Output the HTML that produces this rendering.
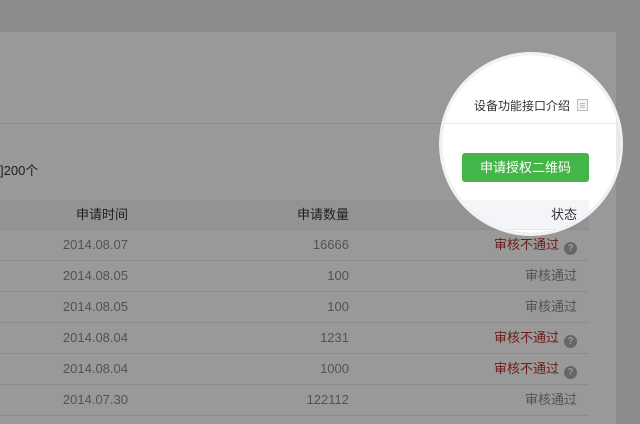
<!DOCTYPE html>
<html><head><meta charset="utf-8"><style>
*{margin:0;padding:0;box-sizing:border-box}
body{width:640px;height:424px;overflow:hidden;background:#8c8c8d;font-family:"Liberation Sans","Noto Sans CJK SC",sans-serif;}
.layer{position:absolute;left:0;top:0;width:640px;height:424px;background:#e9e9eb;}
.dim{filter:brightness(0.6);}
.hi{clip-path:circle(89px at 531px 144px);}
.panel{position:absolute;left:0;top:32px;width:616px;height:392px;background:#fff;}
.t{position:absolute;font-size:13px;color:#333;white-space:nowrap}
.hr{position:absolute;left:0;width:616px;height:1px;background:#e7e7eb}
.btn{position:absolute;left:462px;top:153px;width:127px;height:29px;background:#44b549;border-radius:3px;color:#fff;font-size:13px;text-align:center;line-height:29px}
.th{position:absolute;left:0;top:200px;width:589px;height:30px;background:#f4f5f9;border-bottom:1px solid #e7e7eb;font-size:13px;color:#333}
.row{position:absolute;left:0;width:589px;height:31px;border-bottom:1px solid #e7e7eb;font-size:13px;color:#8a8a8a}
.row span,.th span{position:absolute;top:0;line-height:30px;text-align:right;white-space:nowrap}
.c1{right:461px}.c2{right:240px}.c3{right:12px}
.red{color:#b6322b;font-weight:normal}
.q{display:inline-block;width:13px;height:13px;border-radius:50%;background:#aaa;color:#fff;font-size:10px;line-height:13px;text-align:center;margin-left:5px;vertical-align:-2px;font-weight:bold;font-style:normal}
.doc{position:absolute;left:577px;top:99px;width:11px;height:12px;border:1px solid #bbb;background:#f4f4f4}
.doc i{position:absolute;left:2px;width:5px;height:1px;background:#bbb}
.ring{position:absolute;left:439px;top:52px;width:184px;height:184px;border-radius:50%;border:3px solid #f2f2f3}
</style></head><body>
<div class="layer dim" id="a"></div>
<div class="layer hi" id="b"></div>
<div class="ring"></div>
<template id="tpl">
<div class="panel"></div>
<div class="hr" style="top:123px"></div>
<div class="t" style="left:0;top:160px">]200个</div>
<div class="t" style="left:474px;top:97px;font-size:12px">设备功能接口介绍</div>
<div class="doc"><i style="top:3px"></i><i style="top:5px"></i><i style="top:7px"></i></div>
<div class="btn">申请授权二维码</div>
<div class="th"><span class="c1">申请时间</span><span class="c2">申请数量</span><span class="c3">状态</span></div>
<div class="row" style="top:230px"><span class="c1">2014.08.07</span><span class="c2">16666</span><span class="c3"><b class="red">审核不通过</b><i class="q">?</i></span></div>
<div class="row" style="top:261px"><span class="c1">2014.08.05</span><span class="c2">100</span><span class="c3">审核通过</span></div>
<div class="row" style="top:292px"><span class="c1">2014.08.05</span><span class="c2">100</span><span class="c3">审核通过</span></div>
<div class="row" style="top:323px"><span class="c1">2014.08.04</span><span class="c2">1231</span><span class="c3"><b class="red">审核不通过</b><i class="q">?</i></span></div>
<div class="row" style="top:354px"><span class="c1">2014.08.04</span><span class="c2">1000</span><span class="c3"><b class="red">审核不通过</b><i class="q">?</i></span></div>
<div class="row" style="top:385px"><span class="c1">2014.07.30</span><span class="c2">122112</span><span class="c3">审核通过</span></div>
</template>
<script>
var h=document.getElementById('tpl').innerHTML;
document.getElementById('a').innerHTML=h;
document.getElementById('b').innerHTML=h;
</script>
</body></html>
